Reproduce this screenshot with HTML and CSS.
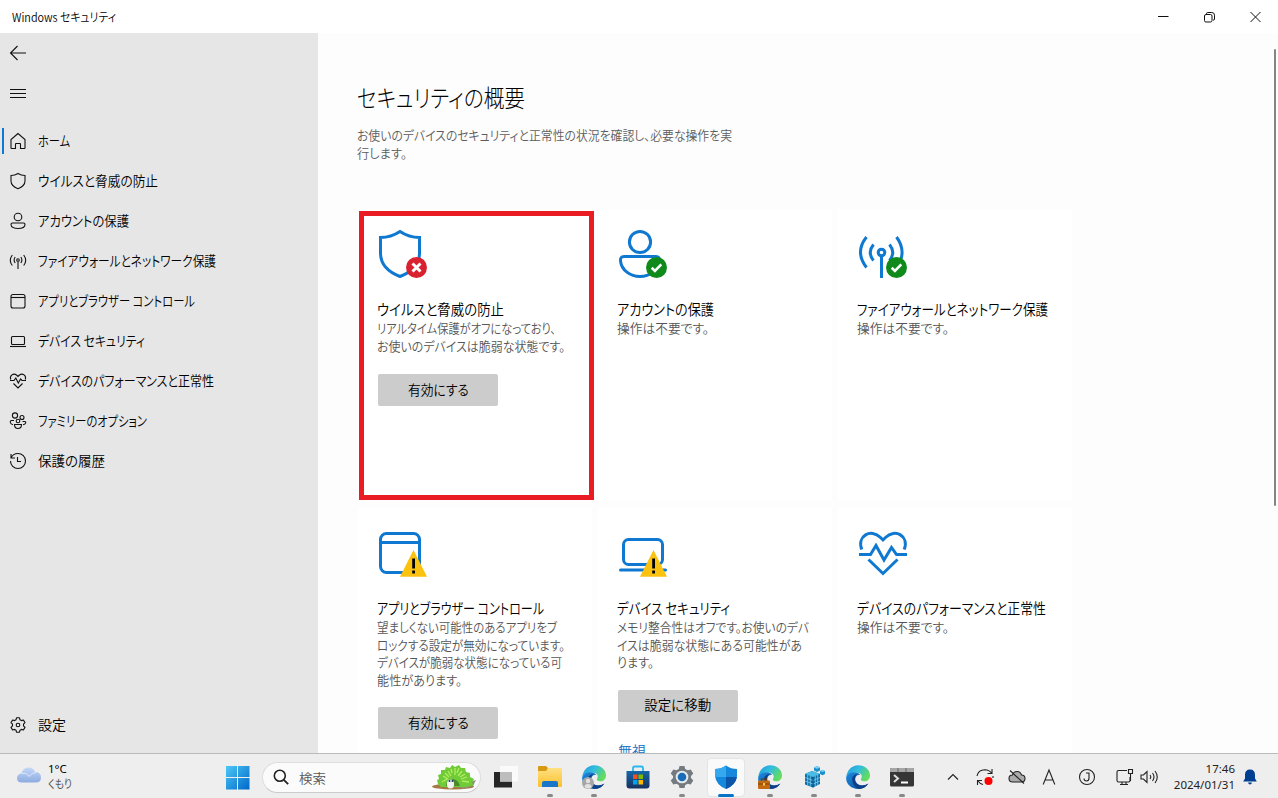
FILE: index.html
```html
<!DOCTYPE html>
<html lang="ja">
<head>
<meta charset="utf-8">
<title>Windows セキュリティ</title>
<link rel="stylesheet" href="styles.css">
</head>
<body>
<svg width="0" height="0" class="defs">
  <defs>
    <linearGradient id="win" x1="0" y1="0" x2="1" y2="1"><stop offset="0" stop-color="#4cc8f8"/><stop offset="1" stop-color="#0067c8"/></linearGradient>
    <linearGradient id="edgeTop" x1="0" y1="0" x2="1" y2=".5"><stop offset="0" stop-color="#2394d8"/><stop offset=".5" stop-color="#31bde0"/><stop offset="1" stop-color="#64dc5c"/></linearGradient>
    <linearGradient id="edgeLow" x1="0" y1="0" x2="1" y2="1"><stop offset="0" stop-color="#1b8be0"/><stop offset="1" stop-color="#0a4a94"/></linearGradient>
    <linearGradient id="folder" x1="0" y1="0" x2="0" y2="1"><stop offset="0" stop-color="#ffe083"/><stop offset="1" stop-color="#fbc02d"/></linearGradient>
    <linearGradient id="store" x1="0" y1="0" x2="0" y2="1"><stop offset="0" stop-color="#1468a8"/><stop offset="1" stop-color="#18305e"/></linearGradient>
    <linearGradient id="cloud" x1="0" y1="0" x2="0" y2="1"><stop offset="0" stop-color="#c4d8f8"/><stop offset="1" stop-color="#8cabe0"/></linearGradient>
    <g id="edge">
      <path d="M.3 12.5C.6 5.5 5.8.2 12.200 .2C19 .2 24 5 24 10.500C24 14 21.500 16.300 18.200 16.300C15.500 16.300 14.300 15 15.200 13.600C17 10.500 14.500 7.600 10 7.600C5.500 7.600 1.500 9.500 .3 12.500Z" fill="url(#edgeTop)"/>
      <path d="M.2 12.500C.8 9.200 4.500 7 9 7.200C12 7.400 13.500 8.500 14.300 9.700C11.500 9.300 9.200 11.300 9.200 14.300C9.200 18 12.600 20.500 16.500 20.500C19 20.500 21 19.700 22.400 18.600C20.200 22 16.500 24 12.200 24C5 24 -.5 18.700 .2 12.500Z" fill="url(#edgeLow)"/>
      <path d="M6.200 14C6.200 11 9 9 11.500 9.200C8.700 10.500 8.400 15 10 17.500C12.500 21.500 18.500 21.300 22.400 18.600C20.200 22 17 24 13.500 24C9 23 6.200 19 6.200 14Z" fill="#0c3f88"/>
    </g>
    <g id="ok"><circle cx="39.500" cy="39.500" r="10.500" fill="#0f8a1b"/><path d="M34.700 39.800l3.200 3.100 6.400-6.500" fill="none" stroke="#fff" stroke-width="2.600"/></g>
    <g id="warn"><path d="M36.500 23L50 49.800H23Z" fill="#fcc210"/><path d="M35.200 31.500h2.800v10h-2.800zM35.200 43.500h2.800v3h-2.800z" fill="#000"/></g>
  </defs>
</svg>

<header class="titlebar">
  <span class="app-name" data-w="104">Windows セキュリティ</span>
  <div class="window-buttons">
    <svg viewBox="-6 0 46 33"><path d="M12 16.500h10.500"/></svg>
    <svg viewBox="-6 0 46 33"><rect x="12.500" y="14.500" width="7.500" height="7.500" rx="1.500"/><path d="M14.500 14v-.2q0-1.300 1.300-1.300h4q2.700 0 2.700 2.700v3.800q0 1.200-1.500 1.200"/></svg>
    <svg viewBox="-6 0 46 33"><path d="M12.500 12l10 10M22.500 12l-10 10"/></svg>
  </div>
</header>

<div class="app">
  <nav class="sidebar">
    <div class="nav-item"><svg viewBox="0 0 18 18"><path d="M8.500 2L1.500 9l7 7M1.500 9H17"/></svg></div>
    <div class="nav-item burger"><svg viewBox="0 0 18 18"><path d="M1 5.500h16M1 9.500h16M1 13.500h16"/></svg></div>
    <div class="nav-item active"><svg viewBox="0 0 18 18"><path d="M9 1.500L2 7.500V16q0 .5.500.5h4v-4.500q0-.5.500-.5h4q.5 0 .5.500v4.500h4q.5 0 .5-.5V7.500Z"/></svg><span data-w="32">ホーム</span></div>
    <div class="nav-item"><svg viewBox="0 0 18 18"><path d="M9 1.500Q12 3.500 16 3.500V9Q16 14 9 16.700Q2 14 2 9V3.500Q6 3.500 9 1.500Z"/></svg><span data-w="120">ウイルスと脅威の防止</span></div>
    <div class="nav-item"><svg viewBox="0 0 18 18"><circle cx="9" cy="5" r="3.800"/><path d="M3.500 11h11q1.500 0 1.500 1.500C16 15.500 12.500 16.500 9 16.500S2 15.500 2 12.500Q2 11 3.500 11Z"/></svg><span data-w="91">アカウントの保護</span></div>
    <div class="nav-item"><svg viewBox="0 0 18 18"><circle cx="9" cy="8" r="1.300"/><path d="M9 9.500V17M6.200 5q-2.200 3 0 6M11.800 5q2.200 3 0 6M3.300 3q-4 5.500 0 10.500M14.700 3q4 5.500 0 10.500"/></svg><span data-w="178">ファイアウォールとネットワーク保護</span></div>
    <div class="nav-item"><svg viewBox="0 0 18 18"><rect x="2" y="2.500" width="14" height="13.500" rx="2"/><path d="M2 5.500h14"/></svg><span data-w="157">アプリとブラウザー コントロール</span></div>
    <div class="nav-item"><svg viewBox="0 0 18 18"><rect x="2.500" y="4.500" width="13" height="8" rx="1"/><path d="M1 14.500h16"/></svg><span data-w="107">デバイス セキュリティ</span></div>
    <div class="nav-item"><svg viewBox="0 0 18 18"><path d="M1.700 7.500C.3 3.500 4.500 .8 7.500 3L9 4.500L10.500 3C13.500 .8 17.700 3.500 16.300 7.500M1 8.500h4L6.800 6l2.500 5 2.300-4 1.400 1.500h4M4.500 11.500L9 16l4.500-4.500"/></svg><span data-w="176">デバイスのパフォーマンスと正常性</span></div>
    <div class="nav-item"><svg viewBox="0 0 18 18"><circle cx="6" cy="3.500" r="2.600"/><circle cx="13" cy="5.500" r="2"/><circle cx="9" cy="9" r="1.800"/><path d="M5 8.500H2.500Q1.200 8.500 1.200 10Q1.500 12.300 4 12.800M13.500 9.500h2.200q1.200 0 1 1.300q-.5 1.700-2.700 2M5.500 12.500h7q0 4-3.500 4t-3.500-4Z"/></svg><span data-w="109">ファミリーのオプション</span></div>
    <div class="nav-item"><svg viewBox="0 0 18 18"><path d="M2 2v4h4M2 6Q4 1.500 9 1.500A7.500 7.500 0 1 1 1.500 9M8.500 5v4.500H12"/></svg><span data-w="67">保護の履歴</span></div>
    <div class="nav-item settings"><svg viewBox="0 0 18 18"><circle cx="9" cy="9" r="1.800"/><path d="M7.500 1.800h3l.5 2 1.400.8 2-.6 1.600 2.600-1.500 1.500v1.800l1.500 1.500-1.600 2.600-2-.6-1.400.8-.5 2h-3l-.5-2-1.400-.8-2 .6L2 11.400l1.500-1.500V8.100L2 6.600 3.600 4l2 .6L7 3.800Z" stroke-linejoin="round"/></svg><span data-w="28">設定</span></div>
  </nav>

  <main class="content">
    <h1><span data-w="168">セキュリティの概要</span></h1>
    <p class="lead"><span data-w="375">お使いのデバイスのセキュリティと正常性の状況を確認し、必要な操作を実</span><span data-w="50">行します。</span></p>
    <section class="cards">
      <article class="card highlighted">
        <svg class="big" viewBox="0 0 52 52"><path d="M23 3.500Q32 9.500 42.500 9.500V25Q42.500 41 23 48.500Q3.500 41 3.500 25V9.500Q14 9.500 23 3.500Z"/><circle cx="39.500" cy="39.500" r="10.500" fill="#d9222f" stroke="none"/><path d="M35.500 35.500l8 8M43.500 35.500l-8 8" stroke="#fff"/></svg>
        <h2><span data-w="127">ウイルスと脅威の防止</span></h2>
        <p><span data-w="179">リアルタイム保護がオフになっており、</span><span data-w="188">お使いのデバイスは脆弱な状態です。</span></p>
        <button><span data-w="61">有効にする</span></button>
      </article>
      <article class="card">
        <svg class="big" viewBox="0 0 52 52"><circle cx="23" cy="14" r="10.600"/><path d="M7 28.500h32q4 0 3.500 4.500C41.500 42 33 48.500 23 48.500S4.500 42 3.500 33Q3 28.500 7 28.500Z"/><use href="#ok" stroke="none"/></svg>
        <h2><span data-w="97">アカウントの保護</span></h2>
        <p class="single"><span data-w="92">操作は不要です。</span></p>
      </article>
      <article class="card">
        <svg class="big" viewBox="0 0 52 52"><circle cx="24.500" cy="24.500" r="3.300"/><path d="M24.500 28v22M16.500 16.500q-6.500 8 0 16M32.500 16.500q6.500 8 0 16M9.500 9Q-2.500 24 9.500 39.500M39.500 9q8 11 4.500 22"/><use href="#ok" stroke="none"/></svg>
        <h2><span data-w="191">ファイアウォールとネットワーク保護</span></h2>
        <p class="single"><span data-w="92">操作は不要です。</span></p>
      </article>
      <article class="card">
        <svg class="big" viewBox="0 0 52 52"><rect x="3.500" y="6.500" width="39" height="39" rx="6"/><path d="M3.500 15.500h39"/><use href="#warn" stroke="none"/></svg>
        <h2><span data-w="167">アプリとブラウザー コントロール</span></h2>
        <p><span data-w="180">望ましくない可能性のあるアプリをブ</span><span data-w="188">ロックする設定が無効になっています。</span><span data-w="185">デバイスが脆弱な状態になっている可</span><span data-w="85">能性があります。</span></p>
        <button class="tight"><span data-w="61">有効にする</span></button>
      </article>
      <article class="card">
        <svg class="big" viewBox="0 0 52 52"><rect x="6.500" y="12.500" width="39" height="25" rx="5"/><path d="M3.500 43h45" stroke-linecap="round"/><use href="#warn" stroke="none"/></svg>
        <h2><span data-w="113">デバイス セキュリティ</span></h2>
        <p><span data-w="192">メモリ整合性はオフです。お使いのデバ</span><span data-w="185">イスは脆弱な状態にある可能性があ</span><span data-w="37">ります。</span></p>
        <button><span data-w="67">設定に移動</span></button>
        <a class="dismiss"><span data-w="28">無視</span></a>
      </article>
      <article class="card">
        <svg class="big" viewBox="0 0 52 52"><path d="M4.800 22.500C-.5 9 14 1 23.500 10.500L26 13l2.500-2.500C38 1 52.500 9 47.200 22.500M2 27.500h11.500L19 18.500l8 14.500 7.500-12.500 5 7H50M11.500 32.500L26 46.500l14.500-14"/></svg>
        <h2><span data-w="189">デバイスのパフォーマンスと正常性</span></h2>
        <p class="single"><span data-w="92">操作は不要です。</span></p>
      </article>
    </section>
    <div class="scrollbar"></div>
  </main>
</div>

<footer class="taskbar">
  <div class="weather">
    <svg viewBox="0 0 26 18"><path d="M6 16.500Q1 16.500 1 12Q1 8 5.500 7.500Q7 1.500 12.500 1.500Q17.500 1.500 19 6Q25 6 25 11.500Q25 16.500 20 16.500Z" fill="url(#cloud)"/><path d="M6 7.500q5-1 7 3 3-4 7-4" fill="none" stroke="#dce8ff" stroke-width="1"/></svg>
    <div><span>1°C</span><span class="dim" data-w="24">くもり</span></div>
  </div>
  <svg class="start" viewBox="0 0 24 24"><path d="M0 0h11v11H0zM12 0h11.500v11H12zM0 12h11v11.500H0zM12 12h11.500v11.500H12z" fill="url(#win)"/></svg>
  <div class="search">
    <svg viewBox="0 0 16 16"><circle cx="6.800" cy="6.800" r="5.500" fill="none" stroke="#222" stroke-width="1.600"/><path d="M10.800 10.800l4.400 4.400" stroke="#222" stroke-width="1.800"/></svg>
    <span data-w="27">検索</span>
    <svg class="hedgehog" viewBox="0 0 46 26"><ellipse cx="22" cy="22.500" rx="21" ry="3" fill="#a67843"/><path d="M26 22l19-6-3 6-10 3Z" fill="#918f78"/><path d="M7 20l-1-4 2-1-1-4 3-1 0-4 4 0 1-3 4 1 2-3 3 2 4-2 2 3 4 0 1 4 4 1 0 4 4 2-2 4 2 2-8 2H10Z" fill="#70cb38"/><path d="M11 18l5-3M12 12l5 3M17 7l3 5M24 4v7M31 7l-4 5M36 13l-6 2M38 18l-7-1M20 5l1 4M28 4l-2 5M14 9l4 4M34 10l-5 3" stroke="#b4ed62" stroke-width="1.300"/><path d="M15 22q0-6 6-7 6 0 8 7Z" fill="#4a8a2c"/><ellipse cx="19.500" cy="20" rx="3.600" ry="4.500" fill="#f1f3ee"/><circle cx="18.500" cy="17" r="1" fill="#153456"/><circle cx="21.500" cy="17" r="1" fill="#153456"/></svg>
  </div>
  <div class="apps">
    <div class="task plain"><svg viewBox="0 0 24 24"><rect x="0" y="7" width="18" height="15.500" fill="#262626"/><rect x="6" y="1" width="18" height="15.500" fill="#fafafa"/><rect x="6" y="7" width="12" height="9.500" fill="#bdbdbd"/></svg></div>
    <div class="task"><svg viewBox="0 0 24 24"><path d="M0 2q0-1 1-1h7l2 2v5H0Z" fill="#d99a13"/><path d="M0 6h8l2-3h13q1 0 1 1v17q0 1-1 1H1q-1 0-1-1Z" fill="url(#folder)"/><path d="M4 22v-4q0-2 2-2h12q2 0 2 2v4Z" fill="#1975c7"/></svg></div>
    <div class="task"><svg viewBox="0 0 24 24"><use href="#edge"/><circle cx="6" cy="18" r="6" fill="#a6a6a6"/><circle cx="6" cy="16" r="2.200" fill="#e1e1e1"/><path d="M2.500 22q0-3 3.500-3t3.500 3Q6 25 2.500 22Z" fill="#e1e1e1"/></svg></div>
    <div class="task plain"><svg viewBox="0 0 24 24"><path d="M7 7V3q0-1.500 1.500-1.500h7Q17 1.500 17 3v4" fill="none" stroke="#29b8ef" stroke-width="1.800"/><path d="M.5 6h23v14.500q0 3-3 3h-17q-3 0-3-3Z" fill="url(#store)"/><path d="M7 9.500h4.500V14H7z" fill="#f25022"/><path d="M12.500 9.500H17V14h-4.500z" fill="#7fba00"/><path d="M7 15h4.500v4.500H7z" fill="#00a4ef"/><path d="M12.500 15H17v4.500h-4.500z" fill="#ffb900"/></svg></div>
    <div class="task"><svg viewBox="0 0 24 24"><path d="M9.500 1h5l.7 3 2.500 1.300 3-.9 2.600 4.200L21 11v2l2.300 2.400-2.600 4.200-3-.9-2.500 1.300-.7 3h-5l-.7-3-2.500-1.300-3 .9-2.600-4.200L3 13v-2L.7 8.600l2.600-4.200 3 .9L8.800 4Z" fill="#747b80"/><circle cx="12" cy="12" r="6.300" fill="#e7eaec"/><circle cx="12" cy="12" r="4.300" fill="#1a6cb8"/></svg></div>
    <div class="task current"><svg viewBox="0 0 24 24"><path d="M12 .5Q17 4 23 4v7Q22 20 12 24Q2 20 1 11V4Q7 4 12 .5Z" fill="#1688dc"/><path d="M12 .5Q7 4 1 4v8h11Z" fill="#35a8ef"/><path d="M12 12h11Q21.500 20 12 24Z" fill="#0c55a8"/></svg></div>
    <div class="task"><svg viewBox="0 0 24 24"><use href="#edge"/><path d="M3.500 16v-2h5v2" fill="none" stroke="#6b3708" stroke-width="1.200"/><rect x="0" y="15.500" width="12" height="8.500" rx="1" fill="#c36a10"/><path d="M0 19h12" stroke="#7c400b"/><rect x="5" y="18" width="2" height="2.500" fill="#ffc54a"/></svg></div>
    <div class="task"><svg viewBox="0 0 24 24"><path d="M3 9l7-3 8 3v10l-7 3.500-8-3Z" fill="#0e6ea6"/><path d="M3 9l7-3 8 3-7 3Z" fill="#49bde6"/><path d="M3 12.500l8 3 7-3M3 16l8 3 7-3M5.700 10v10.500M8.300 11v10.500M13.300 11v10.500M15.700 10v10" fill="none" stroke="#7bcdf0" stroke-width=".8"/><path d="M11 12v10.500" stroke="#0a4e83"/><path d="M12 2.500l3-1.500 3 1.500v3L15 7l-3-1.500ZM18 6l2.500-1.200L23 6v3l-2.500 1.200L18 9Z" fill="#1d8fc8"/><path d="M12 2.500l3-1.500 3 1.500-3 1.300ZM18 6l2.500-1.200L23 6l-2.500 1.100Z" fill="#7ad4f4"/></svg></div>
    <div class="task"><svg viewBox="0 0 24 24"><use href="#edge"/></svg></div>
    <div class="task"><svg viewBox="0 0 24 24"><rect y="3" width="24" height="18.500" rx="1.500" fill="#363636"/><path d="M0 7V4.500Q0 3 1.500 3h21Q24 3 24 4.500V7Z" fill="#a7a7a7"/><path d="M8 3v4M16 3v4" stroke="#666"/><path d="M4 10l4 3.500L4 17" fill="none" stroke="#ddd" stroke-width="2"/><path d="M11 17.500h7" stroke="#fff" stroke-width="2"/></svg></div>
  </div>
  <div class="tray">
    <svg viewBox="0 0 20 20"><path d="M5 12.500l5-5 5 5"/></svg>
    <svg viewBox="0 0 20 20"><path d="M2 9q1-6 8-6.300 4 0 6.500 3.300M17 2v4.500h-4.500M18 9v2M2.500 18v-4.500H7M3 14q2 3 5 3.500"/><circle cx="13.500" cy="14" r="4" fill="#f00" stroke="none"/></svg>
    <svg viewBox="0 0 20 20"><path d="M5.500 15Q2 15 2 11.500T5.500 8Q6.500 4.500 10 4.500T14.500 8Q18 8 18 11.500T14.500 15Z" fill="#aaa"/><path d="M3 3.500l14 13"/></svg>
    <svg viewBox="0 0 20 20"><path d="M4.200 17.500L10 3l5.800 14.500M6 13h8"/></svg>
    <svg class="ime" viewBox="0 0 20 20"><circle cx="10" cy="10" r="7.500"/><path d="M9 6h3v5q0 3-2.500 3T7 11.500"/></svg>
    <svg class="net" viewBox="0 0 20 20"><path d="M12 3.500H3.500Q2 3.500 2 5v8.500Q2 15 3.500 15h10q1.500 0 1.500-1.500V10M5 17.500h8M7 15v2.500M11 15v2.500M13.500 2.500h4v4h-4zM15.500 6.500V14"/></svg>
    <svg class="vol" viewBox="0 0 20 20"><path d="M2 8v4h2.500L8 15.500v-11L4.500 8ZM11 8q1.500 2 0 4M13.500 6q3 4 0 8M16 4q4.500 6 0 12"/></svg>
  </div>
  <div class="clock"><span>17:46</span><span>2024/01/31</span></div>
  <svg class="bell" viewBox="0 0 14 16"><path d="M7 .5Q12 .5 12 6v3.500l1.800 3H.2l1.800-3V6Q2 .5 7 .5ZM5 13.500h4Q8.500 15.500 7 15.500T5 13.500Z" fill="#003e92"/></svg>
</footer>
<script src="fit.js"></script>
</body>
</html>
```

FILE: styles.css
```css
*, *::before, *::after { box-sizing: border-box; }
body {
  margin: 0;
  width: 1278px;
  height: 798px;
  overflow: hidden;
  display: flex;
  flex-direction: column;
  background: #fdfdfd;
  color: #000;
  font-family: "Noto Sans CJK JP", sans-serif;
  font-weight: 350;
  font-size: 14px;
  font-feature-settings: "palt";
}
span { white-space: nowrap; }
[data-w] { display: inline-block; transform-origin: left center; }
svg { display: block; flex: none; }
.defs { position: absolute; }

.titlebar {
  height: 33px;
  flex: none;
  display: flex;
  align-items: center;
  justify-content: space-between;
  padding-left: 12px;
  background: #fff;
  font-size: 12px;
}
.window-buttons { display: flex; }
.window-buttons svg { width: 46px; height: 33px; fill: none; stroke: #111; stroke-width: 1; }

.app { height: 720px; flex: none; display: flex; }
.sidebar { width: 318px; display: flex; flex-direction: column; background: #e6e6e6; padding-bottom: 8px; }
.nav-item { height: 40px; flex: none; display: flex; align-items: center; gap: 11px; padding-left: 9px; line-height: 20px; }
.nav-item span { padding-bottom: 2px; }
.nav-item svg { width: 18px; height: 18px; fill: none; stroke: #111; stroke-width: 1.100; }
.burger { margin-bottom: 8px; }
.active { border-left: 2px solid #0f78d4; border-image: linear-gradient(transparent 8px, #0f78d4 8px, #0f78d4 32px, transparent 32px) 2; margin-left: 2px; padding-left: 5px; }
.settings { margin-top: auto; }

.content { flex: 1; position: relative; overflow: hidden; padding: 46px 0 0 40px; }
h1 { margin: 0 0 11px -1px; font-size: 24px; font-weight: 300; line-height: 36px; }
.lead { margin: 0 0 0 -1px; font-size: 13px; line-height: 18px; color: #5c5c5c; }
.lead span, .card p span { display: block; width: max-content; }
.cards { margin-top: 47px; display: grid; grid-template-columns: repeat(3, 234px); grid-template-rows: 291px 293px; gap: 8px 6px; }
.card { position: relative; background: #fff; padding: 19px; }
.highlighted { z-index: 1; }
.highlighted::after { content: ""; position: absolute; left: 1px; top: 2px; width: 235px; height: 289px; border: 5px solid #e91c24; }
.big { width: 52px; height: 52px; fill: none; stroke: #0f78d0; stroke-width: 3; }
h2 { margin: 19px 0 0; font-size: 15px; font-weight: 350; line-height: 20px; height: 20px; }
.card p { margin: 0; font-size: 13px; line-height: 17.500px; color: #555; }
button { display: block; width: 120px; height: 32px; margin: 20px 0 0 1px; padding: 0 0 3px; border: 0; border-radius: 2px; background: #ccc; font: inherit; font-feature-settings: "palt"; color: #000; }
button [data-w] { transform-origin: center; }
.card:nth-child(5) button { margin-top: 19px; }
button.tight { margin-top: 19px; }
.dismiss { display: block; margin: 18px 0 0 1px; line-height: 20px; color: #0f70c4; }
.scrollbar { position: absolute; right: 2px; top: 16px; width: 2px; height: 457px; border-radius: 1px; background: #858585; }

.taskbar { height: 45px; flex: none; display: flex; align-items: center; border-top: 1px solid #bbb; background: #eee; padding-top: 3px; font-size: 12px; }
.weather { width: 210px; margin: -3px 0 0 16px; display: flex; gap: 6px; }
.weather svg { width: 26px; height: 18px; margin-top: 5px; }
.weather div { display: flex; flex-direction: column; line-height: 15px; font-family: "Noto Sans", "Noto Sans CJK JP", sans-serif; font-size: 11.500px; font-weight: 400; }
.weather .dim { color: #555; width: max-content; font-family: "Noto Sans CJK JP", sans-serif; }
.start { width: 24px; height: 24px; margin-left: -.5px; }
.search { width: 219px; height: 31px; margin: -1px 0 0 12.500px; border: 1px solid #ddd; border-bottom-color: #ccc; border-radius: 16px; background: #fbfbfb; display: flex; align-items: center; padding: 0 3px 0 10px; color: #555; font-size: 13px; }
.search > svg:first-child { width: 16px; height: 16px; margin-right: 10px; }
.search .hedgehog { width: 46px; height: 26px; margin-left: auto; }
.apps { display: flex; margin-left: 3px; }
.task { width: 44px; height: 40px; display: flex; flex-direction: column; align-items: center; padding-top: 7px; position: relative; }
.task svg { width: 24px; height: 24px; position: relative; }
.task::after { content: ""; width: 6px; height: 3px; margin-top: 5px; border-radius: 2px; background: #888; position: relative; }
.plain::after { visibility: hidden; }
.current::before { content: ""; position: absolute; inset: 0 3px 1px; border: 1px solid #e4e4e4; border-radius: 4px; background: #fafafa; }
.current::after { width: 16px; background: #0874c8; }
.tray { display: flex; align-items: center; gap: 12px; margin: -2px 0 0 19px; }
.tray svg { width: 20px; height: 20px; fill: none; stroke: #222; stroke-width: 1.100; }
.tray .ime { margin-left: 6px; }
.tray .net { margin-left: 6px; }
.tray .vol { margin-left: -8px; }
.clock { width: 76px; margin-top: -2px; display: flex; flex-direction: column; align-items: flex-end; line-height: 15.500px; font-family: "Noto Sans", sans-serif; font-size: 11.500px; font-weight: 400; color: #222; }
.bell { width: 14px; height: 16px; margin-left: 8px; margin-top: -2px; }
```

FILE: fit.js
```js
document.querySelectorAll('[data-w]').forEach(function (el) {
  var r = document.createRange();
  r.selectNodeContents(el);
  var natural = r.getBoundingClientRect().width;
  el.style.transform = 'scaleX(' + (Number(el.dataset.w) / natural).toFixed(4) + ')';
});
```
